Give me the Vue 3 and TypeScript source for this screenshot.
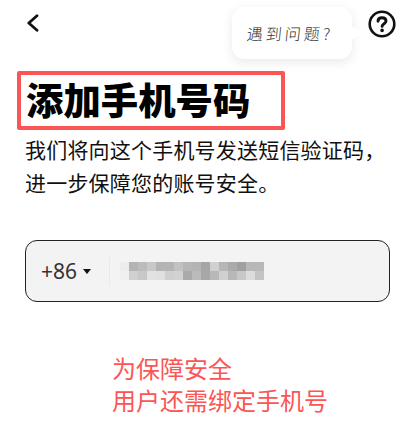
<script setup lang="ts">
const topRow: string[] = ['#ededed','#b4b4b4','#bcbcbc','#c8c8c8','#b4b4b4','#b4b4b4','#c2c2c2','#b6b6b6','#b4b4b4','#a6a6a6','#d0d0d0','#b6b6b6','#aaaaaa','#a0a0a0','#b8b8b8','#b8b8b8']
const bottomRow: string[] = ['#f0f0f0','#d0d0d0','#c8c8c8','#e2e2e2','#e0e0e0','#cfcfcf','#d2d2d2','#aaaaaa','#bbbbbb','#a8a8a8','#b8b8b8','#d0d0d0','#b8b8b8','#c8c8c8','#dcdcdc','#c4c4c4']
</script>

<template>
  <div class="page">
    <header class="top">
      <svg class="back" width="14" height="18" viewBox="0 0 14 18" fill="none">
        <path d="M11 1.7 L2.8 9 L11 16.3" stroke="#111" stroke-width="2.8" stroke-linecap="round" stroke-linejoin="round" />
      </svg>
      <svg class="help" width="30" height="30" viewBox="0 0 30 30" fill="none">
        <circle cx="15" cy="15" r="12.3" stroke="#111" stroke-width="2.6" />
        <path d="M11 12.2 C11 9.9 12.8 8.7 15 8.7 C17.3 8.7 19 10 19 12 C19 14.6 15.1 14.8 15.1 17.4" stroke="#111" stroke-width="2.9" stroke-linecap="round" />
        <circle cx="15.1" cy="21.4" r="1.8" fill="#111" />
      </svg>
    </header>

    <div class="bubble">
      <span class="bubble-text">遇到问题?</span>
      <i class="tail"></i>
    </div>

    <h1 class="title">添加手机号码</h1>
    <p class="desc">我们将向这个手机号发送短信验证码，<br />进一步保障您的账号安全。</p>

    <div class="field">
      <span class="code">+86</span>
      <i class="caret"></i>
      <span class="divider"></span>
      <div class="mosaic">
        <div class="mosaic-row">
          <b v-for="(c, i) in topRow" :key="'t' + i" :style="{ background: c }"></b>
        </div>
        <div class="mosaic-row">
          <b v-for="(c, i) in bottomRow" :key="'b' + i" :style="{ background: c }"></b>
        </div>
      </div>
    </div>

    <p class="note">为保障安全<br />用户还需绑定手机号</p>
  </div>
</template>

<style>
html, body { margin: 0; background: #fff; }
</style>

<style scoped>
.page {
  position: relative;
  width: 416px;
  height: 427px;
  overflow: hidden;
  background: #fff;
  font-family: "Noto Sans CJK SC", "Noto Sans", sans-serif;
  color: #111;
  box-sizing: border-box;
  padding-top: 8px;
}
.top {
  display: flex;
  align-items: center;
  justify-content: space-between;
  height: 30px;
  padding: 0 19.5px 0 26px;
}
.help { margin-top: 2px; }
.bubble {
  position: absolute;
  left: 232px;
  top: 7px;
  width: 120px;
  height: 52px;
  border-radius: 12px;
  background: #fff;
  box-shadow: 0 3px 12px rgba(0, 0, 0, 0.09);
  display: flex;
  align-items: center;
}
.bubble-text {
  margin-left: 15px;
  font-size: 16px;
  font-weight: 300;
  letter-spacing: 3px;
  color: #333;
  transform: skewX(-6deg);
  line-height: 1;
}
.tail {
  position: absolute;
  right: -12px;
  top: 19px;
  width: 0;
  height: 0;
  border-top: 7px solid transparent;
  border-bottom: 7px solid transparent;
  border-left: 13px solid #fff;
}
.title {
  width: 268px;
  height: 59px;
  box-sizing: border-box;
  margin: 33px 0 0 17px;
  padding-left: 5px;
  border: 4px solid #fb5555;
  border-radius: 2px;
  font-size: 37.4px;
  font-weight: 900;
  line-height: 48px;
  color: #000;
  white-space: nowrap;
}
.desc {
  margin: 3px 0 0 25px;
  font-size: 21px;
  letter-spacing: 0.2px;
  line-height: 33px;
  color: #111;
  white-space: nowrap;
}
.field {
  display: flex;
  align-items: center;
  width: 365px;
  height: 62px;
  box-sizing: border-box;
  margin: 41px 0 0 25px;
  padding-left: 15px;
  border: 1.5px solid #222;
  border-radius: 12px;
  background: #f3f3f3;
}
.code {
  font-family: "Noto Sans", sans-serif;
  font-size: 21px;
  color: #333;
}
.caret {
  width: 0;
  height: 0;
  margin-left: 6px;
  border-left: 4.5px solid transparent;
  border-right: 4.5px solid transparent;
  border-top: 5.5px solid #111;
}
.divider {
  width: 1px;
  height: 29px;
  margin-left: 17.5px;
  background: #e8e8e8;
}
.mosaic {
  display: flex;
  flex-direction: column;
  margin-left: 10px;
}
.mosaic-row {
  display: flex;
}
.mosaic-row b {
  display: block;
  width: 9px;
  height: 9px;
}
.note {
  margin: 50px 0 0 112px;
  font-size: 24px;
  line-height: 32px;
  color: #fb5555;
  white-space: nowrap;
}
</style>
